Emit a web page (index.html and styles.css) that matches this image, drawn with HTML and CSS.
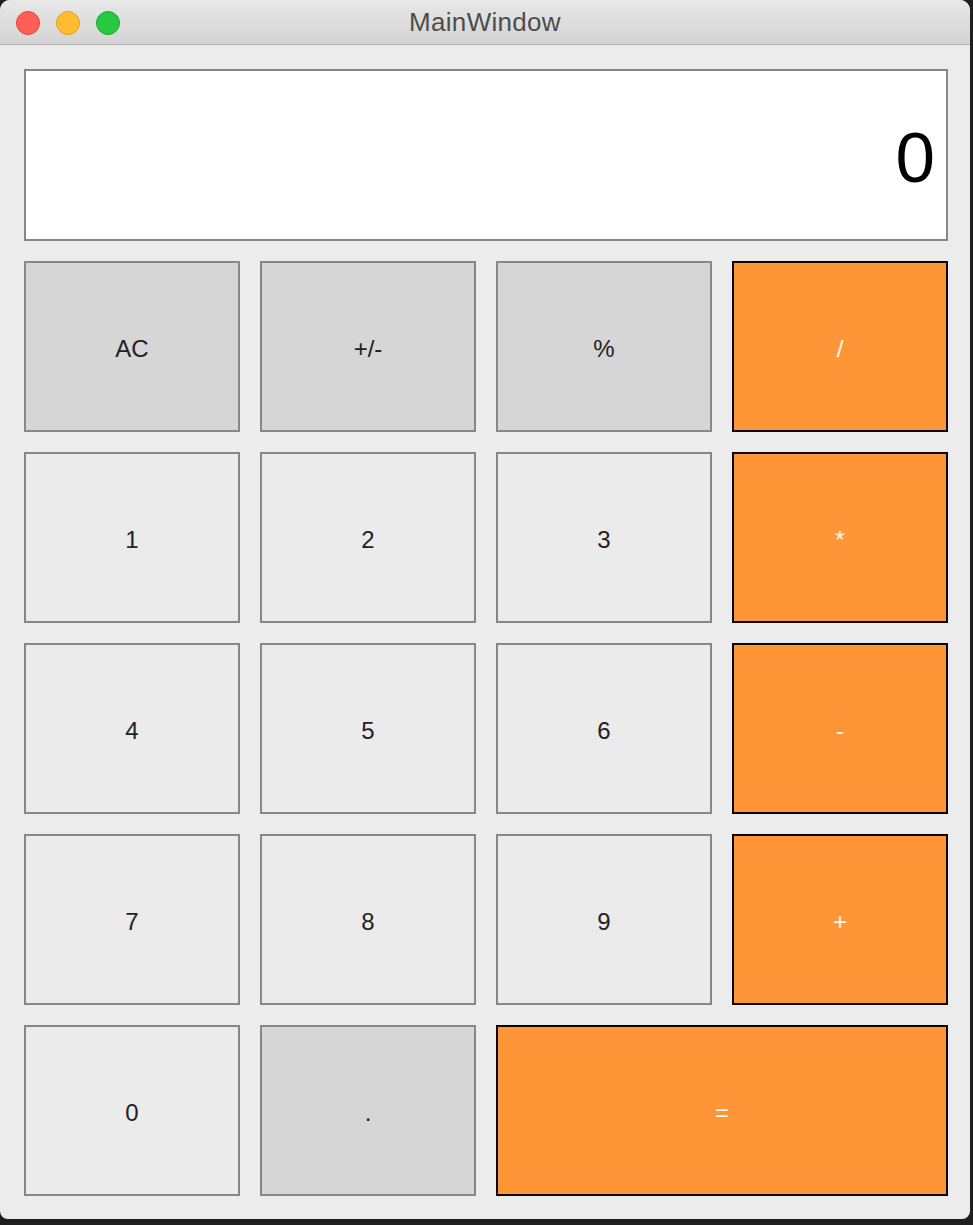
FILE: index.html
```html
<!DOCTYPE html>
<html>
<head>
<meta charset="utf-8">
<title>MainWindow</title>
<link rel="stylesheet" href="styles.css">
</head>
<body>
<div class="window">
  <div class="titlebar">
    <div class="lights">
      <span class="light red"></span>
      <span class="light yellow"></span>
      <span class="light green"></span>
    </div>
    <div class="title">MainWindow</div>
  </div>
  <div class="content">
    <div class="display"><span class="value">0</span></div>
    <div class="keys">
      <div class="key fn">AC</div>
      <div class="key fn">+/-</div>
      <div class="key fn">%</div>
      <div class="key op">/</div>
      <div class="key num">1</div>
      <div class="key num">2</div>
      <div class="key num">3</div>
      <div class="key op">*</div>
      <div class="key num">4</div>
      <div class="key num">5</div>
      <div class="key num">6</div>
      <div class="key op">-</div>
      <div class="key num">7</div>
      <div class="key num">8</div>
      <div class="key num">9</div>
      <div class="key op">+</div>
      <div class="key num">0</div>
      <div class="key fn">.</div>
      <div class="key op wide">=</div>
    </div>
  </div>
</div>
</body>
</html>
```

FILE: styles.css
```css
html, body {
  margin: 0;
  padding: 0;
  background: #1f1f1f;
  height: 1225px;
  overflow: hidden;
}

.window {
  width: 970px;
  height: 1219px;
  background: #ececec;
  border-radius: 10px 10px 8px 8px;
  overflow: hidden;
  font-family: "Liberation Sans", Arial, sans-serif;
}

.titlebar {
  position: relative;
  height: 44px;
  background: linear-gradient(#e8e8e8, #d3d3d3);
  border-bottom: 1px solid #b3b3b3;
  display: flex;
  align-items: center;
  justify-content: center;
}

.lights {
  position: absolute;
  left: 16px;
  top: 11px;
  display: flex;
  gap: 16px;
}

.light {
  width: 22px;
  height: 22px;
  border-radius: 50%;
  display: block;
  border: 1px solid transparent;
}

.red { background: #fe5f57; border-color: #e0443e; }
.yellow { background: #febc2e; border-color: #dea123; }
.green { background: #28c840; border-color: #1aab29; }

.title {
  font-size: 26px;
  color: #4d4d4d;
  letter-spacing: 0.3px;
  margin-top: 1px;
}

.content {
  padding: 24px 22px 0 24px;
}

.display {
  box-sizing: border-box;
  width: 924px;
  height: 172px;
  background: #ffffff;
  border: 2px solid #878787;
  display: flex;
  align-items: center;
  justify-content: flex-end;
  padding: 4px 11px 0 0;
  margin-bottom: 20px;
}

.value {
  font-size: 71px;
  color: #000;
  line-height: 1;
}

.keys {
  display: grid;
  grid-template-columns: repeat(4, 216px);
  grid-template-rows: repeat(5, 171px);
  gap: 20px;
}

.key {
  box-sizing: border-box;
  border: 2px solid #878787;
  display: flex;
  align-items: center;
  justify-content: center;
  padding-top: 4px;
  font-size: 24px;
  color: #222;
}

.fn { background: #d6d6d6; }
.num { background: #ebebeb; }

.op {
  background: #fe9638;
  border-color: #0d0500;
  color: #fff8ea;
}

.wide {
  grid-column: span 2;
}
```
